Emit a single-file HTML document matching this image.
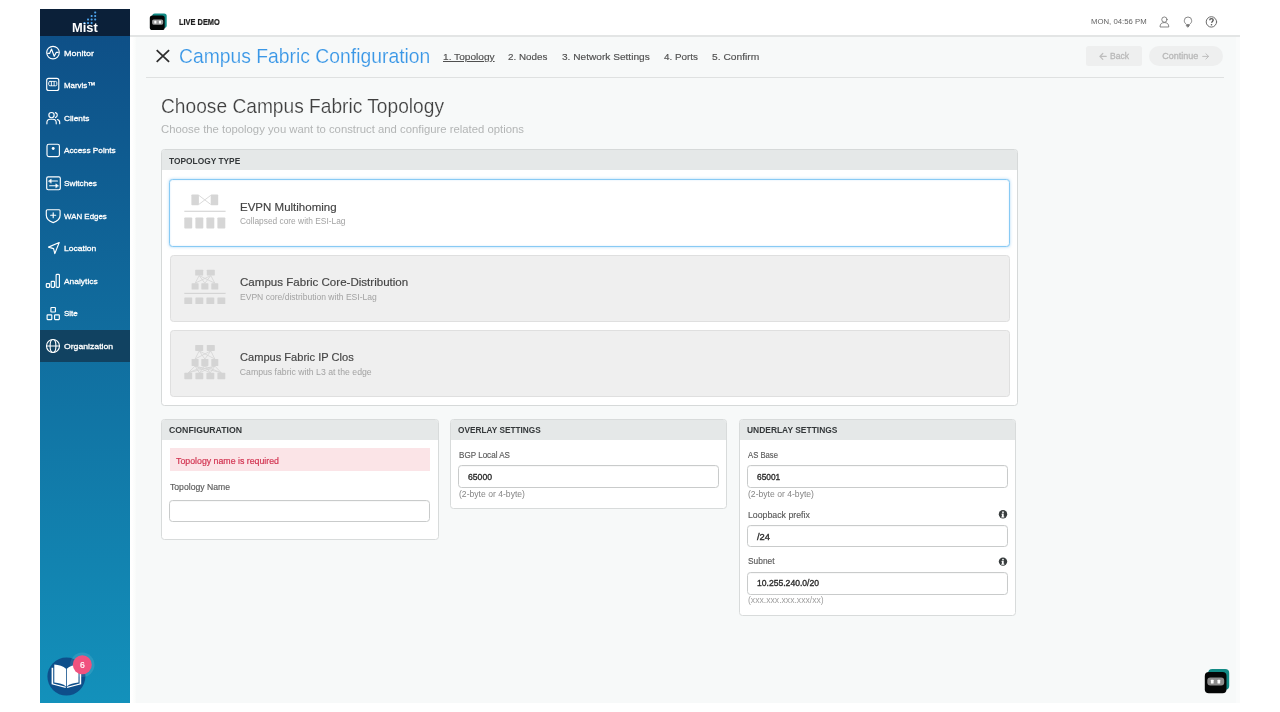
<!DOCTYPE html>
<html>
<head>
<meta charset="utf-8">
<title>Campus Fabric Configuration</title>
<style>
*{box-sizing:border-box;margin:0;padding:0}
html,body{width:1280px;height:712px;background:#fff;overflow:hidden}
body{font-family:"Liberation Sans",sans-serif;color:#333;position:relative}
#w{position:absolute;left:0;top:0;width:1280px;height:712px;overflow:hidden;filter:blur(.5px)}
.abs{position:absolute}
.t{position:absolute;white-space:pre;transform-origin:0 0;font-family:"Liberation Sans",sans-serif}
</style>
</head>
<body>
<div id="w">
<div class="abs" style="left:40.00px;top:9.00px;width:1200.00px;height:694.00px;background:#f7f9f9"></div>
<div class="abs" style="left:1236.00px;top:36.80px;width:4.00px;height:666.20px;background:#fafbfb"></div>
<div class="abs" style="left:130.00px;top:36.80px;width:6.00px;height:666.20px;background:linear-gradient(90deg,#fff 0%,#fff 35%,#f9fbfa 100%)"></div>
<div class="abs" style="left:130.00px;top:9.00px;width:1110.00px;height:26.40px;background:#fff"></div>
<div class="abs" style="left:130.00px;top:35.30px;width:1110.00px;height:1.50px;background:#e3e5e5"></div>
<div class="abs" style="left:40.00px;top:9.00px;width:90.00px;height:694.00px;background:linear-gradient(180deg,rgb(14,77,133) 0%,rgb(19,145,187) 100%)"></div>
<div class="abs" style="left:40.00px;top:9.00px;width:90.00px;height:26.50px;background:#0b2039"></div>
<div class="abs" style="left:40.00px;top:329.70px;width:90.00px;height:32.30px;background:#114261"></div>
<div class="abs" style="left:146.00px;top:76.50px;width:1078.00px;height:1.40px;background:#dfe1e1"></div>
<div class="abs" style="left:1086.20px;top:45.60px;width:55.60px;height:20.70px;background:#eeefef;border-radius:2.5px"></div>
<div class="abs" style="left:1148.50px;top:45.60px;width:74.00px;height:20.70px;background:#eeefef;border-radius:10.5px"></div>
<div class="abs" style="left:160.70px;top:149.10px;width:857.50px;height:256.70px;background:#fff;border:1.3px solid #d6d9d9;border-radius:3.5px"></div>
<div class="abs" style="left:161.80px;top:150.20px;width:855.40px;height:20.10px;background:#e5e8e8;border-radius:2.5px 2.5px 0 0"></div>
<div class="abs" style="left:169.10px;top:178.80px;width:840.70px;height:68.20px;background:#fff;border:1.8px solid #88caf4;border-radius:3.5px;box-shadow:0 0 3px rgba(90,175,238,.5),inset 0 0 2px rgba(120,190,240,.35)"></div>
<div class="abs" style="left:169.50px;top:255.40px;width:840.00px;height:66.20px;background:#efefef;border:1px solid #dfdfdf;border-radius:3.5px"></div>
<div class="abs" style="left:169.50px;top:330.40px;width:840.00px;height:66.20px;background:#efefef;border:1px solid #dfdfdf;border-radius:3.5px"></div>
<div class="abs" style="left:160.80px;top:418.80px;width:278.00px;height:121.70px;background:#fff;border:1.3px solid #d8dbdb;border-radius:3.5px"></div>
<div class="abs" style="left:162.00px;top:420.00px;width:275.60px;height:19.80px;background:#e5e8e8;border-radius:2.5px 2.5px 0 0"></div>
<div class="abs" style="left:449.60px;top:418.80px;width:277.90px;height:90.30px;background:#fff;border:1.3px solid #d8dbdb;border-radius:3.5px"></div>
<div class="abs" style="left:450.80px;top:420.00px;width:275.50px;height:19.80px;background:#e5e8e8;border-radius:2.5px 2.5px 0 0"></div>
<div class="abs" style="left:738.50px;top:418.80px;width:277.60px;height:197.20px;background:#fff;border:1.3px solid #d8dbdb;border-radius:3.5px"></div>
<div class="abs" style="left:739.70px;top:420.00px;width:275.20px;height:19.80px;background:#e5e8e8;border-radius:2.5px 2.5px 0 0"></div>
<div class="abs" style="left:169.80px;top:448.40px;width:259.90px;height:23.10px;background:#fbe4e7"></div>
<div class="abs" style="left:169.40px;top:499.80px;width:260.70px;height:22.60px;background:#fff;border:1.8px solid #c9cbcb;border-radius:3.5px;box-shadow:inset 0 .5px 1px rgba(0,0,0,.06)"></div>
<div class="abs" style="left:458.30px;top:465.10px;width:260.30px;height:22.60px;background:#fff;border:1.8px solid #c9cbcb;border-radius:3.5px;box-shadow:inset 0 .5px 1px rgba(0,0,0,.06)"></div>
<div class="abs" style="left:747.20px;top:465.10px;width:260.40px;height:22.60px;background:#fff;border:1.8px solid #c9cbcb;border-radius:3.5px;box-shadow:inset 0 .5px 1px rgba(0,0,0,.06)"></div>
<div class="abs" style="left:747.20px;top:524.70px;width:260.40px;height:22.50px;background:#fff;border:1.8px solid #c9cbcb;border-radius:3.5px;box-shadow:inset 0 .5px 1px rgba(0,0,0,.06)"></div>
<div class="abs" style="left:747.20px;top:572.10px;width:260.40px;height:22.50px;background:#fff;border:1.8px solid #c9cbcb;border-radius:3.5px;box-shadow:inset 0 .5px 1px rgba(0,0,0,.06)"></div>
<svg class="abs" style="left:0;top:0" width="1280" height="712" viewBox="0 0 1280 712">
<rect x="94.20" y="11.40" width="2" height="2" rx=".7" fill="#4ea5ee"/>
<rect x="94.20" y="14.95" width="2" height="2" rx=".7" fill="#4ea5ee"/>
<rect x="90.62" y="14.95" width="2" height="2" rx=".7" fill="#4ea5ee"/>
<rect x="94.20" y="18.50" width="2" height="2" rx=".7" fill="#4ea5ee"/>
<rect x="90.62" y="18.50" width="2" height="2" rx=".7" fill="#4ea5ee"/>
<rect x="87.04" y="18.50" width="2" height="2" rx=".7" fill="#4ea5ee"/>
<rect x="90.62" y="22.05" width="2" height="2" rx=".7" fill="#4ea5ee"/>
<rect x="87.04" y="22.05" width="2" height="2" rx=".7" fill="#4ea5ee"/>
<rect x="83.46" y="22.05" width="2" height="2" rx=".7" fill="#4ea5ee"/>
<g fill="none" stroke="#fff" stroke-width="1.15" stroke-linecap="round" stroke-linejoin="round"><circle cx="53" cy="52.6" r="6.3"/><path d="M47.800 53.400h1.800l1.900-4.400 2.700 7.300 2-3.900h2"/></g>
<g fill="none" stroke="#fff" stroke-width="1.15" stroke-linecap="round" stroke-linejoin="round"><rect x="46.7" y="78.3" width="12.1" height="12.2" rx="2"/><rect x="48.7" y="81.4" width="8.1" height="4.4" rx="1.3" stroke-width=".9"/><path d="M51.4 81.6v4M54.1 81.6v4" stroke-width=".9"/></g>
<g fill="none" stroke="#fff" stroke-width="1.15" stroke-linecap="round" stroke-linejoin="round"><circle cx="51.5" cy="115.1" r="2.65"/><path d="M46.9 123.8v-1.3a3.3 3.3 0 0 1 3.3-3.3h2.7a3.3 3.3 0 0 1 3.3 3.3v1.3"/><path d="M55.4 112.6a2.6 2.6 0 0 1 0 5"/><path d="M57.4 119.5a3.2 3.2 0 0 1 2.3 3.1v1.2"/></g>
<g fill="none" stroke="#fff" stroke-width="1.15" stroke-linecap="round" stroke-linejoin="round" stroke-width="1.300"><rect x="47" y="144.200" width="12.400" height="12.400" rx="1.800"/><circle cx="53.200" cy="148.500" r="1.450" fill="#fff" stroke="none"/></g>
<g fill="none" stroke="#fff" stroke-width="1.15" stroke-linecap="round" stroke-linejoin="round" stroke-width="1.300"><rect x="46.700" y="176.900" width="13.600" height="12.800" rx="1.400"/><path d="M50.6 181h6.8M49.6 185.7h6.6"/><path d="M48.6 181l2.6-1.9v3.8zM58.4 185.7l-2.6-1.9v3.8z" fill="#fff" stroke-width=".5"/></g>
<g fill="none" stroke="#fff" stroke-width="1.15" stroke-linecap="round" stroke-linejoin="round"><path d="M47.3 209.7h11.8a1 1 0 0 1 1 1v4.6c0 3.8-2.9 6-6.9 7.3-4-1.3-6.9-3.5-6.9-7.3v-4.6a1 1 0 0 1 1-1z"/><path d="M50.7 215.2h5M53.2 212.7v5"/></g>
<g fill="none" stroke="#fff" stroke-width="1.15" stroke-linecap="round" stroke-linejoin="round"><path d="M59.2 242.5l-10.7 4.6 5.1 1.5 1.2 5z"/></g>
<g fill="none" stroke="#fff" stroke-width="1.15" stroke-linecap="round" stroke-linejoin="round" stroke-width="1.05"><rect x="46.3" y="283.6" width="3.3" height="3.7" rx=".7"/><rect x="51.2" y="281.3" width="3.3" height="6" rx=".7"/><rect x="56.1" y="274.3" width="3.3" height="13" rx=".9"/></g>
<g fill="none" stroke="#fff" stroke-width="1.15" stroke-linecap="round" stroke-linejoin="round" stroke-width="1.05"><rect x="50.9" y="307.5" width="4.5" height="4.5" rx=".5"/><rect x="47.1" y="314.9" width="4.7" height="4.7" rx=".5"/><rect x="54.6" y="314.9" width="4.7" height="4.7" rx=".5"/></g>
<g fill="none" stroke="#fff" stroke-width="1.15" stroke-linecap="round" stroke-linejoin="round"><circle cx="53" cy="346" r="6.5"/><ellipse cx="53" cy="346" rx="2.9" ry="6.5"/><path d="M46.500 346h13" stroke-width="1"/></g>
<circle cx="66.4" cy="676.6" r="19" fill="#0e4f8b"/>
<path d="M51.6 667.8h1.6v15.6l12.5 3.3v1.2l-14.1-3.6zM81.2 667.8h-1.6v15.6l-12.5 3.3v1.2l14.1-3.6z" fill="#fff"/>
<path d="M54.3 664.4c4.600.3 9 1.600 11.700 4.400v17.600c-2.700-2.300-7.100-3.500-11.700-3.800zM78.500 664.400c-4.600.3-9 1.600-11.700 4.400v17.600c2.700-2.300 7.100-3.500 11.700-3.800z" fill="#fff"/>
<circle cx="82.3" cy="664.8" r="12.2" fill="#fff" opacity=".1"/>
<circle cx="82.3" cy="664.8" r="9.5" fill="#f0527f"/>
<rect x="152.200" y="13.500" width="14.500" height="14.400" rx="2.600" fill="#128a85"/>
<rect x="149.800" y="15.500" width="14.900" height="14.600" rx="2.600" fill="#040606"/>
<rect x="152.100" y="19.500" width="11.100" height="5.200" rx="1.600" fill="#9c9c9c"/>
<rect x="154.300" y="20.700" width="2.100" height="2.900" rx=".4" fill="#fff"/><rect x="158.900" y="20.700" width="2.100" height="2.900" rx=".4" fill="#fff"/>
<rect x="1208.200" y="669" width="21" height="20.800" rx="4" fill="#128a85"/>
<rect x="1204.800" y="672" width="21.700" height="21.300" rx="4" fill="#040606"/>
<rect x="1207.300" y="677.600" width="16.900" height="8" rx="3" fill="#8c8c8c"/>
<rect x="1210.900" y="679.700" width="2.700" height="3.800" rx=".5" fill="#fff"/><rect x="1217.500" y="679.700" width="2.700" height="3.800" rx=".5" fill="#fff"/>
<path d="M156.700 50.100l12.400 11.800M169.100 50.100l-12.400 11.800" stroke="#2e2e2e" stroke-width="1.750" fill="none"/>
<g fill="none" stroke="#6a6a6a" stroke-width=".8" stroke-linecap="round" stroke-linejoin="round"><circle cx="1164.400" cy="19.600" r="2.650"/><path d="M1160 26.600c0-2.900 1.800-4 4.400-4s4.400 1.100 4.400 4z"/></g>
<g fill="none" stroke="#6a6a6a" stroke-width=".8" stroke-linecap="round" stroke-linejoin="round"><path d="M1186.300 24.300c-1.400-1-2-2.200-2-3.600a3.700 3.700 0 0 1 7.400 0c0 1.400-.6 2.600-2 3.600z"/><path d="M1186.600 25.500h2.800l-1.400 1.500z" fill="#5f5f5f"/></g>
<g fill="none" stroke="#6a6a6a" stroke-width=".8" stroke-linecap="round" stroke-linejoin="round"><circle cx="1211.400" cy="21.900" r="5.200" stroke-width="1"/></g>
<path d="M1209.700 20.300c0-1.100.8-1.700 1.800-1.700s1.700.6 1.700 1.500c0 1.300-1.600 1.300-1.600 2.700" fill="none" stroke="#555" stroke-width="1.350"/><circle cx="1211.500" cy="24.700" r=".8" fill="#555"/>
<g fill="none" stroke="#bdbdbd" stroke-width="1.200" stroke-linecap="round" stroke-linejoin="round"><path d="M1100 56.400h6.200M1102.800 53.500l-2.900 2.900 2.900 2.900"/></g>
<g fill="none" stroke="#bdbdbd" stroke-width="1.200" stroke-linecap="round" stroke-linejoin="round"><path d="M1202.700 56.400h5.800M1205.900 53.800l2.700 2.600-2.700 2.600" stroke-width="1"/></g>
<circle cx="1003" cy="514.3" r="4.200" fill="#383d3e"/>
<circle cx="1003" cy="512.2" r=".850" fill="#fff"/>
<path d="M1001.900 513.5h1.800v3h.6v.9h-3v-.9h.6v-2.100h-.6z" fill="#fff"/>
<circle cx="1003" cy="561.6" r="4.200" fill="#383d3e"/>
<circle cx="1003" cy="559.5" r=".850" fill="#fff"/>
<path d="M1001.900 560.8h1.800v3h.6v.9h-3v-.9h.6v-2.100h-.6z" fill="#fff"/>
<g fill="#d6d6d6">
<rect x="191.400" y="194.400" width="7.500" height="10.800" rx=".8"/><rect x="210.700" y="194.400" width="7.500" height="10.800" rx=".8"/>
<rect x="184.300" y="210.700" width="41.300" height="1.200"/>
<rect x="184.3" y="217.400" width="7.900" height="11.200" rx=".8"/>
<rect x="195.4" y="217.400" width="7.900" height="11.200" rx=".8"/>
<rect x="206.4" y="217.400" width="7.900" height="11.200" rx=".8"/>
<rect x="217.4" y="217.400" width="7.900" height="11.200" rx=".8"/>
</g>
<path d="M198.900 195.400l11.800 9M198.900 204.400l11.800-9" stroke="#d6d6d6" stroke-width=".9" fill="none"/>
<g fill="#d4d4d4">
<rect x="195.2" y="269.700" width="8.0" height="5.900" rx=".6"/>
<rect x="206.8" y="269.700" width="8.0" height="5.900" rx=".6"/>
<rect x="191.6" y="283.200" width="7.0" height="6.400" rx=".6"/>
<rect x="201.3" y="283.200" width="7.1" height="6.400" rx=".6"/>
<rect x="211.3" y="283.200" width="7.0" height="6.400" rx=".6"/>
<rect x="184.300" y="292.800" width="41.300" height="1.200"/>
<rect x="184.3" y="297.500" width="7.900" height="6.600" rx=".6"/>
<rect x="195.4" y="297.500" width="7.900" height="6.600" rx=".6"/>
<rect x="206.4" y="297.500" width="7.900" height="6.600" rx=".6"/>
<rect x="217.4" y="297.500" width="7.900" height="6.600" rx=".6"/>
</g>
<path d="M199.2 275.600L195.1 283.200M199.2 275.600L204.9 283.200M199.2 275.600L214.8 283.200M210.8 275.600L195.1 283.200M210.8 275.600L204.9 283.200M210.8 275.600L214.8 283.200" stroke="#d4d4d4" stroke-width=".8" fill="none"/>
<g fill="#d4d4d4">
<rect x="195.2" y="345" width="8.0" height="5.900" rx=".6"/>
<rect x="206.8" y="345" width="8.0" height="5.900" rx=".6"/>
<rect x="191.6" y="359" width="7.0" height="7" rx=".6"/>
<rect x="201.3" y="359" width="7.1" height="7" rx=".6"/>
<rect x="211.3" y="359" width="7.0" height="7" rx=".6"/>
<rect x="184.3" y="372.800" width="7.900" height="6.400" rx=".6"/>
<rect x="195.4" y="372.800" width="7.900" height="6.400" rx=".6"/>
<rect x="206.4" y="372.800" width="7.900" height="6.400" rx=".6"/>
<rect x="217.4" y="372.800" width="7.900" height="6.400" rx=".6"/>
</g>
<path d="M199.2 350.900L195.1 359M199.2 350.900L204.9 359M199.2 350.900L214.8 359M210.8 350.900L195.1 359M210.8 350.900L204.9 359M210.8 350.900L214.8 359M195.1 366L188.2 372.800M195.1 366L199.3 372.800M195.1 366L210.3 372.800M195.1 366L221.3 372.800M204.9 366L188.2 372.800M204.9 366L199.3 372.800M204.9 366L210.3 372.800M204.9 366L221.3 372.800M214.8 366L188.2 372.800M214.8 366L199.3 372.800M214.8 366L210.3 372.800M214.8 366L221.3 372.800" stroke="#d4d4d4" stroke-width=".8" fill="none"/>
</svg>
<div class="t" style="left:72.30px;top:21.20px;font-size:13.2px;line-height:13.2px;color:#fff;font-weight:bold;transform:scaleX(0.9744);">Mist</div>
<div class="t" style="left:64.00px;top:49.60px;font-size:8.1px;line-height:8.1px;color:#fff;transform:scaleX(1.1111);-webkit-text-stroke:.3px #fff;">Monitor</div>
<div class="t" style="left:64.00px;top:82.20px;font-size:8.1px;line-height:8.1px;color:#fff;transform:scaleX(0.9769);-webkit-text-stroke:.3px #fff;">Marvis™</div>
<div class="t" style="left:64.00px;top:114.80px;font-size:8.1px;line-height:8.1px;color:#fff;transform:scaleX(1.0263);-webkit-text-stroke:.3px #fff;">Clients</div>
<div class="t" style="left:64.00px;top:147.40px;font-size:8.1px;line-height:8.1px;color:#fff;transform:scaleX(1.0168);-webkit-text-stroke:.3px #fff;">Access Points</div>
<div class="t" style="left:64.00px;top:180.00px;font-size:8.1px;line-height:8.1px;color:#fff;transform:scaleX(1.0188);-webkit-text-stroke:.3px #fff;">Switches</div>
<div class="t" style="left:64.00px;top:212.60px;font-size:8.1px;line-height:8.1px;color:#fff;transform:scaleX(0.9776);-webkit-text-stroke:.3px #fff;">WAN Edges</div>
<div class="t" style="left:64.00px;top:245.20px;font-size:8.1px;line-height:8.1px;color:#fff;transform:scaleX(1.0552);-webkit-text-stroke:.3px #fff;">Location</div>
<div class="t" style="left:64.00px;top:277.80px;font-size:8.1px;line-height:8.1px;color:#fff;transform:scaleX(1.0404);-webkit-text-stroke:.3px #fff;">Analytics</div>
<div class="t" style="left:64.00px;top:310.40px;font-size:8.1px;line-height:8.1px;color:#fff;transform:scaleX(0.9819);-webkit-text-stroke:.3px #fff;">Site</div>
<div class="t" style="left:64.00px;top:343.00px;font-size:8.1px;line-height:8.1px;color:#fff;transform:scaleX(1.0696);-webkit-text-stroke:.3px #fff;">Organization</div>
<div class="t" style="left:179.00px;top:17.80px;font-size:8.6px;line-height:8.6px;color:#1e1e1e;font-weight:bold;transform:scaleX(0.8629);-webkit-text-stroke:.2px #1e1e1e;">LIVE DEMO</div>
<div class="t" style="left:1090.60px;top:18.40px;font-size:8.1px;line-height:8.1px;color:#636363;transform:scaleX(0.9581);">MON, 04:56 PM</div>
<div class="t" style="left:178.80px;top:46.80px;font-size:19.3px;line-height:19.3px;color:#3a97e6;transform:scaleX(1.0021);-webkit-text-stroke:.15px #f7f9f9;">Campus Fabric Configuration</div>
<div class="t" style="left:442.70px;top:51.50px;font-size:9.4px;line-height:9.4px;color:#505050;transform:scaleX(1.0799);-webkit-text-stroke:.15px #505050;text-decoration:underline;text-decoration-thickness:.8px;text-underline-offset:1.2px;">1. Topology</div>
<div class="t" style="left:508.40px;top:51.50px;font-size:9.4px;line-height:9.4px;color:#505050;transform:scaleX(1.0471);-webkit-text-stroke:.15px #505050;">2. Nodes</div>
<div class="t" style="left:562.00px;top:51.50px;font-size:9.4px;line-height:9.4px;color:#505050;transform:scaleX(1.0788);-webkit-text-stroke:.15px #505050;">3. Network Settings</div>
<div class="t" style="left:663.70px;top:51.50px;font-size:9.4px;line-height:9.4px;color:#505050;transform:scaleX(1.0522);-webkit-text-stroke:.15px #505050;">4. Ports</div>
<div class="t" style="left:712.00px;top:51.50px;font-size:9.4px;line-height:9.4px;color:#505050;transform:scaleX(1.0936);-webkit-text-stroke:.15px #505050;">5. Confirm</div>
<div class="t" style="left:1109.70px;top:52.30px;font-size:9.0px;line-height:9.0px;color:#b8b8b8;transform:scaleX(0.9493);-webkit-text-stroke:.3px #b8b8b8;">Back</div>
<div class="t" style="left:1162.20px;top:52.30px;font-size:9.0px;line-height:9.0px;color:#b8b8b8;-webkit-text-stroke:.3px #b8b8b8;">Continue</div>
<div class="t" style="left:161.20px;top:97.40px;font-size:19.8px;line-height:19.8px;color:#404040;transform:scaleX(0.9688);-webkit-text-stroke:.2px #f7f9f9;">Choose Campus Fabric Topology</div>
<div class="t" style="left:161.20px;top:124.00px;font-size:11.5px;line-height:11.5px;color:#b3b5b5;transform:scaleX(0.9840);">Choose the topology you want to construct and configure related options</div>
<div class="t" style="left:168.80px;top:155.90px;font-size:9.7px;line-height:9.7px;color:#34383a;font-weight:bold;transform:scaleX(0.8631);">TOPOLOGY TYPE</div>
<div class="t" style="left:169.00px;top:424.80px;font-size:9.7px;line-height:9.7px;color:#34383a;font-weight:bold;transform:scaleX(0.9002);">CONFIGURATION</div>
<div class="t" style="left:458.00px;top:424.80px;font-size:9.7px;line-height:9.7px;color:#34383a;font-weight:bold;transform:scaleX(0.8544);">OVERLAY SETTINGS</div>
<div class="t" style="left:746.90px;top:424.80px;font-size:9.7px;line-height:9.7px;color:#34383a;font-weight:bold;transform:scaleX(0.8701);">UNDERLAY SETTINGS</div>
<div class="t" style="left:239.70px;top:201.30px;font-size:11.7px;line-height:11.7px;color:#444;transform:scaleX(0.9848);-webkit-text-stroke:.17px #444;">EVPN Multihoming</div>
<div class="t" style="left:239.80px;top:217.30px;font-size:8.7px;line-height:8.7px;color:#a2a2a2;transform:scaleX(0.9624);">Collapsed core with ESI-Lag</div>
<div class="t" style="left:239.90px;top:276.30px;font-size:11.7px;line-height:11.7px;color:#444;transform:scaleX(0.9884);-webkit-text-stroke:.17px #444;">Campus Fabric Core-Distribution</div>
<div class="t" style="left:239.80px;top:292.50px;font-size:8.7px;line-height:8.7px;color:#a2a2a2;transform:scaleX(0.9833);">EVPN core/distribution with ESI-Lag</div>
<div class="t" style="left:239.90px;top:351.30px;font-size:11.7px;line-height:11.7px;color:#444;transform:scaleX(0.9479);-webkit-text-stroke:.17px #444;">Campus Fabric IP Clos</div>
<div class="t" style="left:239.80px;top:367.50px;font-size:8.7px;line-height:8.7px;color:#a2a2a2;">Campus fabric with L3 at the edge</div>
<div class="t" style="left:175.60px;top:457.10px;font-size:8.9px;line-height:8.9px;color:#d23552;transform:scaleX(0.9895);-webkit-text-stroke:.2px #d23552;">Topology name is required</div>
<div class="t" style="left:169.80px;top:482.70px;font-size:8.75px;line-height:8.75px;color:#5a5a5a;transform:scaleX(0.9866);-webkit-text-stroke:.15px #5a5a5a;">Topology Name</div>
<div class="t" style="left:458.70px;top:450.60px;font-size:8.75px;line-height:8.75px;color:#5a5a5a;transform:scaleX(0.9223);-webkit-text-stroke:.15px #5a5a5a;">BGP Local AS</div>
<div class="t" style="left:467.70px;top:472.80px;font-size:8.9px;line-height:8.9px;color:#2b2b2b;transform:scaleX(0.9722);-webkit-text-stroke:.35px #2b2b2b;">65000</div>
<div class="t" style="left:458.70px;top:489.80px;font-size:8.9px;line-height:8.9px;color:#858585;transform:scaleX(0.9695);">(2-byte or 4-byte)</div>
<div class="t" style="left:748.00px;top:450.60px;font-size:8.75px;line-height:8.75px;color:#5a5a5a;transform:scaleX(0.8807);-webkit-text-stroke:.15px #5a5a5a;">AS Base</div>
<div class="t" style="left:756.50px;top:472.80px;font-size:8.9px;line-height:8.9px;color:#2b2b2b;transform:scaleX(0.9397);-webkit-text-stroke:.35px #2b2b2b;">65001</div>
<div class="t" style="left:748.00px;top:489.80px;font-size:8.9px;line-height:8.9px;color:#858585;transform:scaleX(0.9695);">(2-byte or 4-byte)</div>
<div class="t" style="left:748.00px;top:510.60px;font-size:8.75px;line-height:8.75px;color:#5a5a5a;-webkit-text-stroke:.15px #5a5a5a;">Loopback prefix</div>
<div class="t" style="left:756.50px;top:532.60px;font-size:8.9px;line-height:8.9px;color:#2b2b2b;transform:scaleX(1.0532);-webkit-text-stroke:.35px #2b2b2b;">/24</div>
<div class="t" style="left:748.00px;top:557.40px;font-size:8.75px;line-height:8.75px;color:#5a5a5a;transform:scaleX(0.9555);-webkit-text-stroke:.15px #5a5a5a;">Subnet</div>
<div class="t" style="left:756.50px;top:579.20px;font-size:8.9px;line-height:8.9px;color:#2b2b2b;transform:scaleX(0.9662);-webkit-text-stroke:.35px #2b2b2b;">10.255.240.0/20</div>
<div class="t" style="left:748.00px;top:596.10px;font-size:8.3px;line-height:8.3px;color:#a0a0a0;transform:scaleX(1.0394);">(xxx.xxx.xxx.xxx/xx)</div>
<div class="t" style="left:79.90px;top:660.60px;font-size:8.6px;line-height:8.6px;color:#fff;-webkit-text-stroke:.2px #fff;">6</div>
</div>
</body>
</html>
